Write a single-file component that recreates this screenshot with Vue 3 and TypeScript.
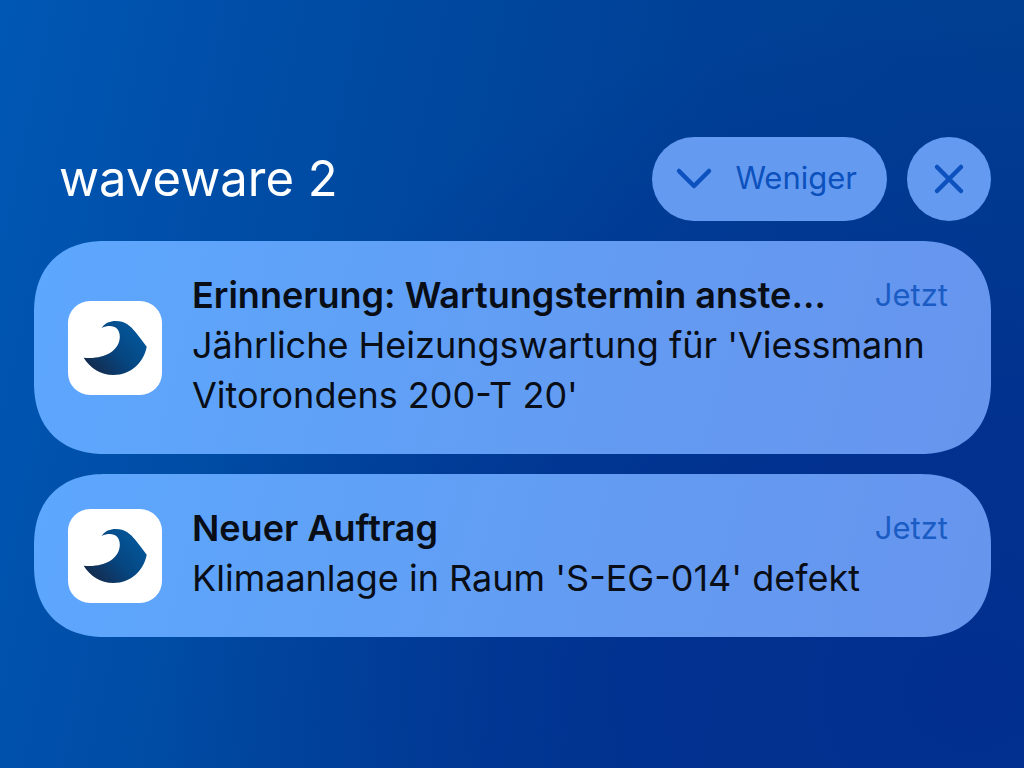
<script setup lang="ts">
import { ref } from 'vue'

interface Notice {
  id: number
  title: string
  body: string
  time: string
}

const notices = ref<Notice[]>([
  {
    id: 1,
    title: 'Erinnerung: Wartungstermin anste…',
    body: "Jährliche Heizungswartung für 'Viessmann Vitorondens 200-T 20'",
    time: 'Jetzt',
  },
  {
    id: 2,
    title: 'Neuer Auftrag',
    body: "Klimaanlage in Raum 'S-EG-014' defekt",
    time: 'Jetzt',
  },
])
</script>

<template>
  <main class="screen">
    <header class="head">
      <h1 class="app-name">waveware 2</h1>
      <button class="pill less" type="button">
        <svg class="chevron" viewBox="0 0 36 22" aria-hidden="true">
          <path d="M3 4 L18 19 L33 4" />
        </svg>
        <span>Weniger</span>
      </button>
      <button class="pill close" type="button" aria-label="Schließen">
        <svg class="cross" viewBox="0 0 28 28" aria-hidden="true">
          <path d="M2 2 L26 26 M26 2 L2 26" />
        </svg>
      </button>
    </header>

    <article v-for="n in notices" :key="n.id" class="card">
      <svg class="logo" viewBox="0 0 283 283" aria-hidden="true">
        <defs>
          <linearGradient :id="`wave-${n.id}`" x1="0.15" y1="0.9" x2="0.85" y2="0.35">
            <stop offset="0" stop-color="#142c4f" />
            <stop offset="0.55" stop-color="#064580" />
            <stop offset="1" stop-color="#045394" />
          </linearGradient>
        </defs>
        <path
          :fill="`url(#wave-${n.id})`"
          d="M101 81 C112 66 126 60 144 60 C171 60 187 74 203 93 C214 107 226 122 237 138 C228 185 190 223 137 223 C97 223 67 202 47 171 C105 177 155 153 156 108 C156 79 133 68 101 81 Z"
        />
      </svg>
      <div class="content">
        <div class="row">
          <h2 class="title">{{ n.title }}</h2>
          <time class="time">{{ n.time }}</time>
        </div>
        <p class="body">{{ n.body }}</p>
      </div>
    </article>
  </main>
</template>

<style>
body {
  margin: 0;
}
</style>

<style scoped>
.screen {
  box-sizing: border-box;
  min-height: 100vh;
  padding: 137px 33px 48px 34px;
  display: flex;
  flex-direction: column;
  gap: 20px;
  font-family: Inter, "Liberation Sans", sans-serif;
  background:
    radial-gradient(ellipse 80% 90% at 95% 90%, rgba(2, 46, 143, 0.95), rgba(2, 46, 143, 0.8) 40%, rgba(2, 46, 143, 0)),
    linear-gradient(102deg, #0058b4 0%, #004ea8 20%, #00489f 38%, #004096 62%, #003f8e 100%);
}

.head {
  display: flex;
  align-items: center;
  gap: 20px;
}

.app-name {
  flex: 1;
  margin: 0;
  padding-left: 25px;
  font-size: 49px;
  line-height: 84px;
  font-weight: 400;
  color: #fff;
  white-space: nowrap;
}

.pill {
  display: flex;
  align-items: center;
  justify-content: center;
  height: 84px;
  margin: 0;
  border: 0;
  border-radius: 42px;
  background: #649bf1;
  color: #0c51bd;
  font-family: inherit;
  font-size: 31px;
  line-height: 40px;
  cursor: pointer;
}

.less {
  gap: 23px;
  padding: 0 30px 2px 24px;
}

.close {
  width: 84px;
  padding: 0;
}

.chevron,
.cross {
  fill: none;
  stroke: currentColor;
  stroke-width: 4.5;
  stroke-linecap: round;
  stroke-linejoin: round;
  overflow: visible;
}

.chevron {
  width: 36px;
  height: 22px;
}

.cross {
  width: 28px;
  height: 28px;
}

.card {
  display: flex;
  align-items: center;
  gap: 30px;
  padding: 29px 43px 29px 34px;
  border-radius: 72px;
  corner-shape: superellipse(1.2);
  background: linear-gradient(104deg, #5da7fe 0%, #5fa2f8 30%, #649af1 65%, #6795ee 100%);
  color: #080d16;
}

.logo {
  flex: none;
  width: 94px;
  height: 94px;
  border-radius: 22px;
  background: #fff;
}

.content {
  flex: 1;
  min-width: 0;
  padding-bottom: 5px;
}

.row {
  display: flex;
  align-items: center;
  justify-content: space-between;
}

.title {
  margin: 0;
  font-size: 36px;
  line-height: 50px;
  font-weight: 600;
  white-space: nowrap;
}

.time {
  font-size: 31px;
  line-height: 50px;
  color: #1a5cc4;
}

.body {
  margin: 0;
  font-size: 36px;
  line-height: 50px;
}
</style>
